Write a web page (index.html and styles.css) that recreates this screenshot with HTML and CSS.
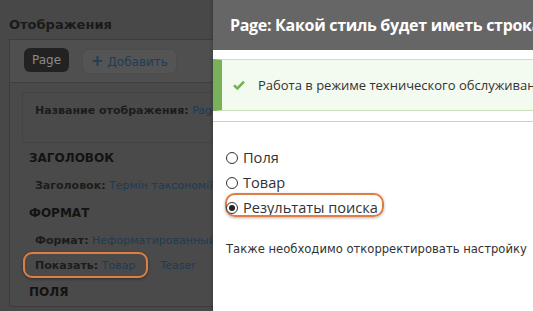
FILE: index.html
```html
<!DOCTYPE html>
<html lang="ru">
<head>
    <meta charset="UTF-8">
    <meta name="viewport" content="width=device-width, initial-scale=1.0">
    <title>Отображения</title>
    <link rel="stylesheet" href="styles.css">
</head>
<body>
    <div class="page">
        <h2 class="page-title">Отображения</h2>
        <div class="display-box">
            <div class="tabs">
                <span class="tab-active">Page</span>
                <span class="tab-add"><b>+</b> Добавить</span>
            </div>
            <div class="box-body">
                <div class="name-box">
                    <span class="label">Название отображения:</span> <a class="link">Page</a>
                </div>
                <h3 class="section-title">ЗАГОЛОВОК</h3>
                <div class="row"><span class="label">Заголовок:</span> <a class="link">Термін таксономії</a></div>
                <h3 class="section-title">ФОРМАТ</h3>
                <div class="row row-short"><span class="label">Формат:</span> <a class="link">Неформатированный список</a></div>
                <div class="row-show">
                    <span class="highlight"><span class="label">Показать:</span> <a class="link">Товар</a></span>
                    <a class="link">Teaser</a>
                </div>
                <h3 class="section-title">ПОЛЯ</h3>
            </div>
        </div>
    </div>

    <div class="modal">
        <div class="modal-header">Page: Какой стиль будет иметь строка</div>
        <div class="modal-body">
            <div class="message">
                <svg class="check" width="12" height="10" viewBox="0 0 12 10">
                    <path d="M1 5.2 L4.4 8.4 L11 1.6" fill="none" stroke="#73b355" stroke-width="2.6"/>
                </svg>
                <span>Работа в режиме технического обслуживания</span>
            </div>
            <div class="options">
                <label class="option"><span class="radio"></span>Поля</label>
                <label class="option"><span class="radio"></span>Товар</label>
                <label class="option option-picked"><span class="radio checked"></span>Результаты поиска</label>
            </div>
            <p class="note">Также необходимо откорректировать настройку</p>
        </div>
    </div>
</body>
</html>
```

FILE: styles.css
```css
html, body {
    margin: 0;
    height: 100%;
    overflow: hidden;
}

body {
    background: #484848;
    font-family: "DejaVu Sans", Verdana, sans-serif;
    position: relative;
}

.page {
    padding: 15px 0 0 9px;
    width: 600px;
}

.page-title {
    margin: 0 0 5px 0;
    font-size: 13px;
    font-weight: bold;
    color: #1a1a1a;
    line-height: 19px;
}

.display-box {
    border: 1px solid #3d3d3d;
    border-right: none;
    background: #4a4a4a;
}

.tabs {
    display: flex;
    align-items: center;
    gap: 13px;
    height: 42px;
    padding: 0 14px;
    background: #4f4f4f;
    border-bottom: 1px solid #3f3f3f;
}

.tab-active {
    background: #222;
    color: #8a8a8a;
    font-size: 12px;
    line-height: 24px;
    padding: 0 8px;
    border-radius: 6px;
    margin-top: -2px;
}

.tab-add {
    background: #545454;
    border: 1px solid #4c4c4c;
    color: #1f3c58;
    font-size: 12px;
    line-height: 22px;
    padding: 0 8px;
    border-radius: 6px;
}

.tab-add b {
    font-size: 15px;
}

.box-body {
    padding: 9px 0 0 12px;
}

.name-box {
    border: 1px solid #434343;
    border-right: none;
    padding: 9px 12px 22px 12px;
    font-size: 11px;
    line-height: 18px;
    margin-bottom: 2px;
}

.label {
    font-weight: bold;
    color: #1c1c1c;
}

.link {
    color: #1e3a55;
}

.section-title {
    margin: 0;
    padding-left: 7px;
    font-size: 12px;
    font-weight: bold;
    color: #131313;
    line-height: 27px;
}

.row {
    padding-left: 13px;
    font-size: 11px;
    line-height: 28px;
    white-space: nowrap;
}

.row-short {
    padding-top: 3px;
    line-height: 21px;
}

.row-show {
    height: 28px;
    padding-left: 1px;
    display: flex;
    align-items: center;
    gap: 12px;
    font-size: 11px;
    white-space: nowrap;
}

.highlight {
    border: 2px solid #e07d40;
    border-radius: 9px;
    padding: 3px 11px 2px 10px;
    line-height: 17px;
    box-shadow: 0 1px 3px rgba(0, 0, 0, 0.4);
}

.modal {
    position: absolute;
    top: 0;
    left: 213px;
    width: 340px;
    height: 100%;
    background: #fff;
    box-shadow: -1px 0 3px rgba(0, 0, 0, 0.2);
}

.modal-header {
    height: 50px;
    background: #666;
    color: #fff;
    font-family: "Open Sans", sans-serif;
    font-weight: bold;
    font-size: 16px;
    letter-spacing: -0.3px;
    line-height: 50px;
    padding-left: 17px;
    white-space: nowrap;
}

.modal-body {
    padding-top: 9px;
}

.message {
    display: flex;
    align-items: center;
    gap: 13px;
    height: 50px;
    background: #f3faef;
    border: 1px solid #c9e1bd;
    border-left: 9px solid #77b259;
    border-right: none;
    padding-left: 11px;
    font-family: "Open Sans", sans-serif;
    font-size: 13px;
    color: #333;
    white-space: nowrap;
}

.check {
    flex-shrink: 0;
}

.options {
    border-top: 1px solid #cfcfcf;
    margin-top: 10px;
    padding: 26px 0 0 13px;
    display: flex;
    flex-direction: column;
    align-items: flex-start;
    gap: 6px;
}

.option {
    display: flex;
    align-items: center;
    gap: 5px;
    font-family: "Open Sans", sans-serif;
    font-size: 14.6px;
    color: #333;
    line-height: 19px;
    position: relative;
}

.option-picked::before {
    content: "";
    position: absolute;
    left: -1px;
    top: -5px;
    bottom: 0;
    right: -6px;
    border: 2px solid #e07d40;
    border-radius: 10px;
    box-shadow: 0 1px 3px rgba(0, 0, 0, 0.3);
}

.radio {
    width: 10px;
    height: 10px;
    border: 1px solid #333;
    border-radius: 50%;
    background: #fff;
    position: relative;
}

.radio.checked::after {
    content: "";
    position: absolute;
    left: 2px;
    top: 2px;
    width: 6px;
    height: 6px;
    border-radius: 50%;
    background: #222;
}

.note {
    margin: 25px 0 0 13px;
    font-size: 11.6px;
    line-height: 14px;
    color: #333;
    white-space: nowrap;
}
```
